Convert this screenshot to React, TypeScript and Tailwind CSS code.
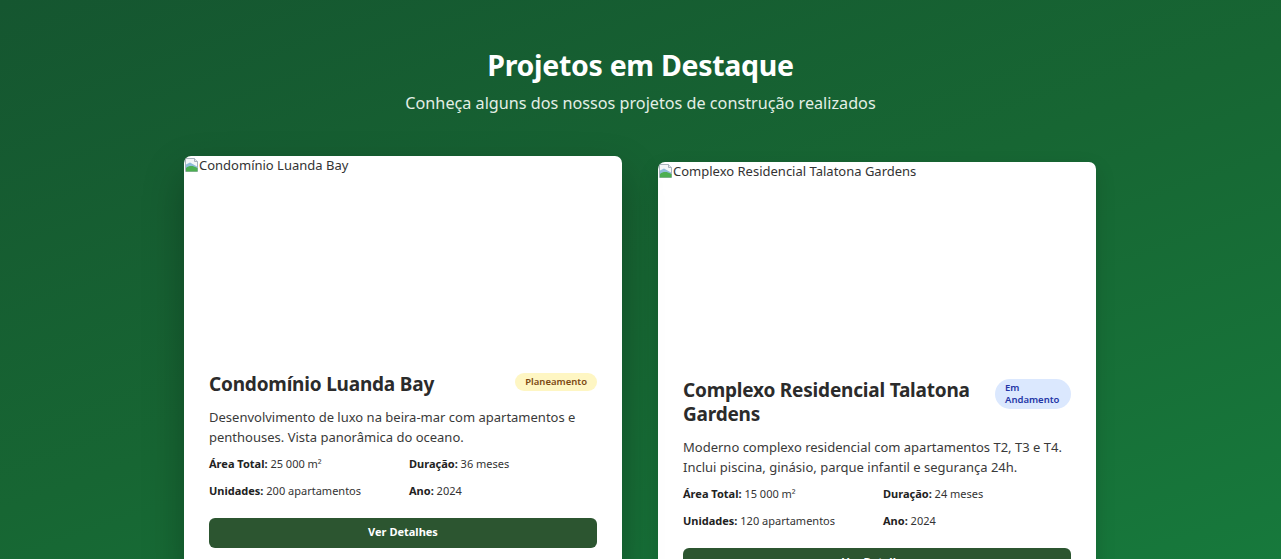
import React from "react";

type Project = {
  title: string;
  status: string;
  badgeClass: string;
  description: string;
  area: string;
  duration: string;
  units: string;
  year: string;
  cardClass: string;
};

const projects: Project[] = [
  {
    title: "Condomínio Luanda Bay",
    status: "Planeamento",
    badgeClass: "bg-[#fef6c3] text-[#7c4a12] whitespace-nowrap shrink-0",
    description:
      "Desenvolvimento de luxo na beira-mar com apartamentos e penthouses. Vista panorâmica do oceano.",
    area: "25 000 m²",
    duration: "36 meses",
    units: "200 apartamentos",
    year: "2024",
    cardClass: "-translate-y-[6px] shadow-[0_18px_40px_rgba(0,0,0,0.28)]",
  },
  {
    title: "Complexo Residencial Talatona Gardens",
    status: "Em Andamento",
    badgeClass: "bg-[#dbe8fe] text-[#2336a6] w-[76px] shrink-0",
    description:
      "Moderno complexo residencial com apartamentos T2, T3 e T4. Inclui piscina, ginásio, parque infantil e segurança 24h.",
    area: "15 000 m²",
    duration: "24 meses",
    units: "120 apartamentos",
    year: "2024",
    cardClass: "shadow-[0_8px_20px_rgba(0,0,0,0.15)]",
  },
];

function BrokenImage({ alt }: { alt: string }) {
  return (
    <div className="flex items-start text-[13px] leading-[18px] text-[#333]">
      <svg width="16" height="16" viewBox="0 0 16 16" className="mt-[1px] mr-[-1px] shrink-0">
        <path d="M1.5 1.5h9l3 3v10h-12z" fill="#f4f6f8" stroke="#a9b3bd" />
        <path d="M10.5 1.5v3h3" fill="#e2e6ea" stroke="#a9b3bd" />
        <path d="M2 7.5l4-2 7 4v4.5H2z" fill="#8fbcd8" />
        <path d="M2 14.5v-3.5c2.5-2 5-2.5 8-1.5 1.5.5 2.5 1 3.5 2v3z" fill="#4caf50" />
      </svg>
      <span>{alt}</span>
    </div>
  );
}

function ProjectCard({ p }: { p: Project }) {
  return (
    <div className={`w-[438px] self-start rounded-[7px] bg-white overflow-hidden ${p.cardClass}`}>
      <div className="h-[192px]">
        <BrokenImage alt={p.title} />
      </div>
      <div className="px-[25px] pt-[24px] pb-6">
        <div className="flex items-start justify-between gap-[19px] mb-3">
          <h3 className="text-[19px] leading-[24px] font-bold text-[#2b2b2b] tracking-[-0.2px]">
            {p.title}
          </h3>
          <span
            className={`mt-[1px] rounded-full px-[10px] py-[3px] text-[9.5px] leading-[12px] font-semibold ${p.badgeClass}`}
          >
            {p.status}
          </span>
        </div>
        <p className="text-[13px] leading-[19.5px] text-[#3a3a3a] mb-[9px]">{p.description}</p>
        <div className="grid grid-cols-2 gap-x-3 gap-y-[10.5px] text-[11px] leading-[16.5px] text-[#333]">
          <div>
            <span className="font-bold text-[#222]">Área Total:</span> {p.area}
          </div>
          <div>
            <span className="font-bold text-[#222]">Duração:</span> {p.duration}
          </div>
          <div>
            <span className="font-bold text-[#222]">Unidades:</span> {p.units}
          </div>
          <div>
            <span className="font-bold text-[#222]">Ano:</span> {p.year}
          </div>
        </div>
        <button className="mt-[18px] w-full h-[30px] rounded-[6px] bg-[#2c5530] text-white text-[11px] font-bold">
          Ver Detalhes
        </button>
      </div>
    </div>
  );
}

export default function App() {
  return (
    <div
      className="min-h-[559px] h-[559px] overflow-hidden bg-[linear-gradient(160deg,#155630_0%,#176633_50%,#17793c_100%)]"
      style={{ fontFamily: '"Noto Sans", "Open Sans", sans-serif' }}
    >
      <section className="pt-[47px] text-center">
        <h2 className="text-[28.5px] leading-[36px] font-bold text-white tracking-[-0.3px]">
          Projetos em Destaque
        </h2>
        <p className="mt-2 text-[16.2px] leading-[24px] text-[#e3efe6]">
          Conheça alguns dos nossos projetos de construção realizados
        </p>
      </section>

      {/* Cards */}
      <div className="mt-[47px] flex justify-center gap-[36px] pr-[1px] text-left">
        {projects.map((p) => (
          <ProjectCard key={p.title} p={p} />
        ))}
      </div>
    </div>
  );
}
